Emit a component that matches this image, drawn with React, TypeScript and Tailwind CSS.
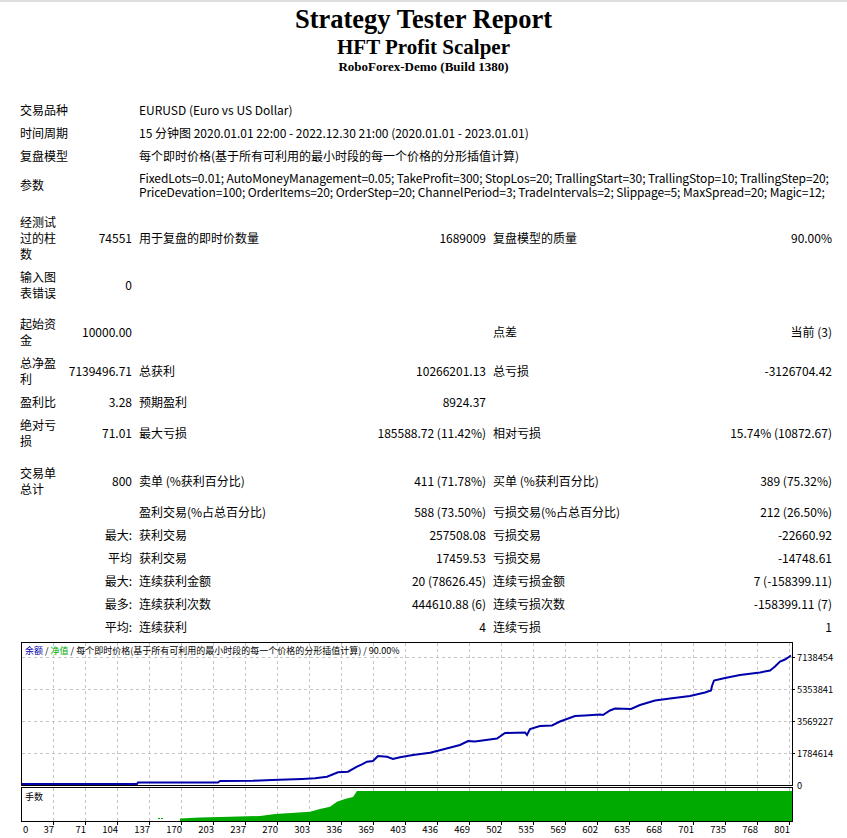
import React from 'react';

type Row =
  | { kind: 'full'; label: string; value: string }
  | { kind: 'params' }
  | { kind: 'gap'; h: 'a' | 'b' }
  | { kind: 'six'; cells: [string, string, string, string, string, string] };

const rows: Row[] = [
  { kind: 'full', label: '交易品种', value: 'EURUSD (Euro vs US Dollar)' },
  { kind: 'full', label: '时间周期', value: '15 分钟图 2020.01.01 22:00 - 2022.12.30 21:00 (2020.01.01 - 2023.01.01)' },
  { kind: 'full', label: '复盘模型', value: '每个即时价格(基于所有可利用的最小时段的每一个价格的分形插值计算)' },
  { kind: 'params' },
  { kind: 'gap', h: 'a' },
  { kind: 'six', cells: ['经测试过的柱数', '74551', '用于复盘的即时价数量', '1689009', '复盘模型的质量', '90.00%'] },
  { kind: 'six', cells: ['输入图表错误', '0', '', '', '', ''] },
  { kind: 'gap', h: 'a' },
  { kind: 'six', cells: ['起始资金', '10000.00', '', '', '点差', '当前 (3)'] },
  { kind: 'six', cells: ['总净盈利', '7139496.71', '总获利', '10266201.13', '总亏损', '-3126704.42'] },
  { kind: 'six', cells: ['盈利比', '3.28', '预期盈利', '8924.37', '', ''] },
  { kind: 'six', cells: ['绝对亏损', '71.01', '最大亏损', '185588.72 (11.42%)', '相对亏损', '15.74% (10872.67)'] },
  { kind: 'gap', h: 'b' },
  { kind: 'six', cells: ['交易单总计', '800', '卖单 (%获利百分比)', '411 (71.78%)', '买单 (%获利百分比)', '389 (75.32%)'] },
  { kind: 'six', cells: ['', '', '盈利交易(%占总百分比)', '588 (73.50%)', '亏损交易(%占总百分比)', '212 (26.50%)'] },
  { kind: 'six', cells: ['', '最大:', '获利交易', '257508.08', '亏损交易', '-22660.92'] },
  { kind: 'six', cells: ['', '平均', '获利交易', '17459.53', '亏损交易', '-14748.61'] },
  { kind: 'six', cells: ['', '最大:', '连续获利金额', '20 (78626.45)', '连续亏损金额', '7 (-158399.11)'] },
  { kind: 'six', cells: ['', '最多:', '连续获利次数', '444610.88 (6)', '连续亏损次数', '-158399.11 (7)'] },
  { kind: 'six', cells: ['', '平均:', '连续获利', '4', '连续亏损', '1'] },
];

const cell = 'py-[3.5px] leading-[16px] self-center';

const gridX = Array.from({ length: 24 }, (_, i) => 53 + 32 * i);
const xLabels = ['37', '71', '104', '137', '170', '203', '237', '270', '303', '336', '369', '403', '436', '469', '502', '535', '569', '602', '635', '668', '701', '735', '768', '801'];
const gridY = [17, 49, 81, 113];
const yLabels = [
  { t: '7138454', y: 21 },
  { t: '5353841', y: 53 },
  { t: '3569227', y: 85 },
  { t: '1784614', y: 117 },
  { t: '0', y: 149 },
];

// page coords, y shifted by -640 below
const equity: [number, number][] = [
  [22, 784], [137, 784], [138, 782.5], [218, 782.5], [220, 781], [253, 780.7], [272, 780], [302, 779],
  [315, 778.3], [327, 776.7], [338, 772.3], [348, 771.7], [357, 766.7], [362, 764.3], [367, 761.7],
  [373, 761], [378, 756], [387, 756.7], [393, 759], [400, 757.3], [413, 755], [430, 752.7],
  [437, 751], [460, 745], [468, 741], [475, 741.5], [497, 738.5], [505, 733], [525, 732.5],
  [527, 735], [530, 729], [540, 726], [552, 725.5], [560, 721.5], [575, 716], [585, 715.5],
  [600, 714.5], [603, 715], [610, 710.5], [615, 708.5], [631, 709], [640, 705], [655, 700.5],
  [670, 698.5], [690, 696], [705, 692.5], [711, 690.5], [712, 686], [714, 680.5], [725, 678],
  [740, 675], [760, 672.5], [770, 670.5], [775, 666.5], [780, 661.5], [785, 659.5], [791, 655.5],
];

const lots: [number, number][] = [
  [180, 821], [180, 818.5], [200, 817.5], [230, 816.7], [260, 816], [275, 814], [295, 812.7],
  [310, 811.7], [320, 809], [330, 806.7], [337, 801.7], [345, 799], [353, 797], [357, 791],
  [792, 791], [792, 821],
];

const pts = (a: [number, number][]) => a.map(([x, y]) => `${x},${y - 640}`).join(' ');

const Chart = () => (
  <svg width={847} height={197} className="block mt-[1.5px] font-['Noto_Sans_CJK_SC',sans-serif]">
    {/* grid */}
    {gridX.map((x) => (
      <g key={x}>
        <line x1={x + 0.5} y1={3} x2={x + 0.5} y2={145} stroke="#c4c4c4" strokeDasharray="3 3" />
        <line x1={x + 0.5} y1={148} x2={x + 0.5} y2={181} stroke="#c4c4c4" strokeDasharray="3 3" />
        <line x1={x + 0.5} y1={182} x2={x + 0.5} y2={185} stroke="#000" />
      </g>
    ))}
    {gridY.map((y) => (
      <g key={y}>
        <line x1={22} y1={y + 0.5} x2={792} y2={y + 0.5} stroke="#c4c4c4" strokeDasharray="3 3" />
        <line x1={792} y1={y + 0.5} x2={795} y2={y + 0.5} stroke="#000" />
      </g>
    ))}

    {/* lots fill */}
    <rect x={158} y={178} width={2} height={1} fill="#00aa00" />
    <rect x={161} y={178} width={2} height={1} fill="#00aa00" />
    <polygon points={pts(lots)} fill="#00aa00" />

    {/* balance curve */}
    <polyline points={pts(equity)} fill="none" stroke="#0000aa" strokeWidth={2} />

    {/* frames */}
    <rect x={21.5} y={2.5} width={771} height={143} fill="none" stroke="#000" />
    <rect x={21.5} y={147.5} width={771} height={34} fill="none" stroke="#000" />

    <text x={25} y={14} fontSize={9} fill="#000">
      <tspan fill="#0000aa">余额</tspan>
      <tspan> / </tspan>
      <tspan fill="#00aa00">净值</tspan>
      <tspan> / 每个即时价格(基于所有可利用的最小时段的每一个价格的分形插值计算) / 90.00%</tspan>
    </text>
    <text x={25} y={160} fontSize={9} fill="#000">手数</text>

    {yLabels.map((l) => (
      <text key={l.t} x={797} y={l.y} fontSize={9.3} fill="#000">{l.t}</text>
    ))}
    <text x={23} y={193} fontSize={9.5} fill="#000">0</text>
    {gridX.map((x, i) => (
      <text key={x} x={x + 1} y={193} fontSize={9.5} fill="#000" textAnchor="end">{xLabels[i]}</text>
    ))}
  </svg>
);

export default function App() {
  return (
    <div className="w-[847px] bg-white text-black border-t-2 border-[#dedede]">
      <div className="text-center font-['Liberation_Serif',serif] font-bold">
        <div className="pt-[3px] text-[26.5px] leading-[28px]">Strategy Tester Report</div>
        <div className="text-[21px] leading-[24px] mt-[2px]">HFT Profit Scalper</div>
        <div className="text-[13px] leading-[16px]">RoboForex-Demo (Build 1380)</div>
      </div>

      <div className="mt-[23.5px] ml-[20px] grid grid-cols-[38px_74px_171px_183px_234px_112px] text-[12px] font-['Noto_Sans_CJK_SC',sans-serif]">
        {rows.map((r, i) => {
          if (r.kind === 'gap') {
            return <div key={i} className={`col-span-6 ${r.h === 'a' ? 'h-[8px]' : 'h-[9px]'}`} />;
          }
          if (r.kind === 'full') {
            return (
              <React.Fragment key={i}>
                <div className={`col-span-2 whitespace-nowrap ${cell}`}>{r.label}</div>
                <div className={`col-span-4 pl-[7px] whitespace-nowrap ${cell}`}>{r.value}</div>
              </React.Fragment>
            );
          }
          if (r.kind === 'params') {
            return (
              <React.Fragment key={i}>
                <div className={`col-span-2 ${cell}`}>参数</div>
                <div className="col-span-4 pl-[7px] py-[3.5px] leading-[14px] tracking-[-0.1px] whitespace-nowrap">
                  FixedLots=0.01; AutoMoneyManagement=0.05; TakeProfit=300; StopLos=20; TrallingStart=30; TrallingStop=10; TrallingStep=20;
                  <br />
                  PriceDevation=100; OrderItems=20; OrderStep=20; ChannelPeriod=3; TradeIntervals=2; Slippage=5; MaxSpread=20; Magic=12;
                </div>
              </React.Fragment>
            );
          }
          const [a, b, c, d, e, f] = r.cells;
          return (
            <React.Fragment key={i}>
              <div className={cell}>{a}</div>
              <div className={`text-right whitespace-nowrap ${cell}`}>{b}</div>
              <div className={`pl-[7px] whitespace-nowrap ${cell}`}>{c}</div>
              <div className={`text-right whitespace-nowrap ${cell}`}>{d}</div>
              <div className={`pl-[7px] whitespace-nowrap ${cell}`}>{e}</div>
              <div className={`text-right whitespace-nowrap ${cell}`}>{f}</div>
            </React.Fragment>
          );
        })}
      </div>

      <Chart />
    </div>
  );
}
